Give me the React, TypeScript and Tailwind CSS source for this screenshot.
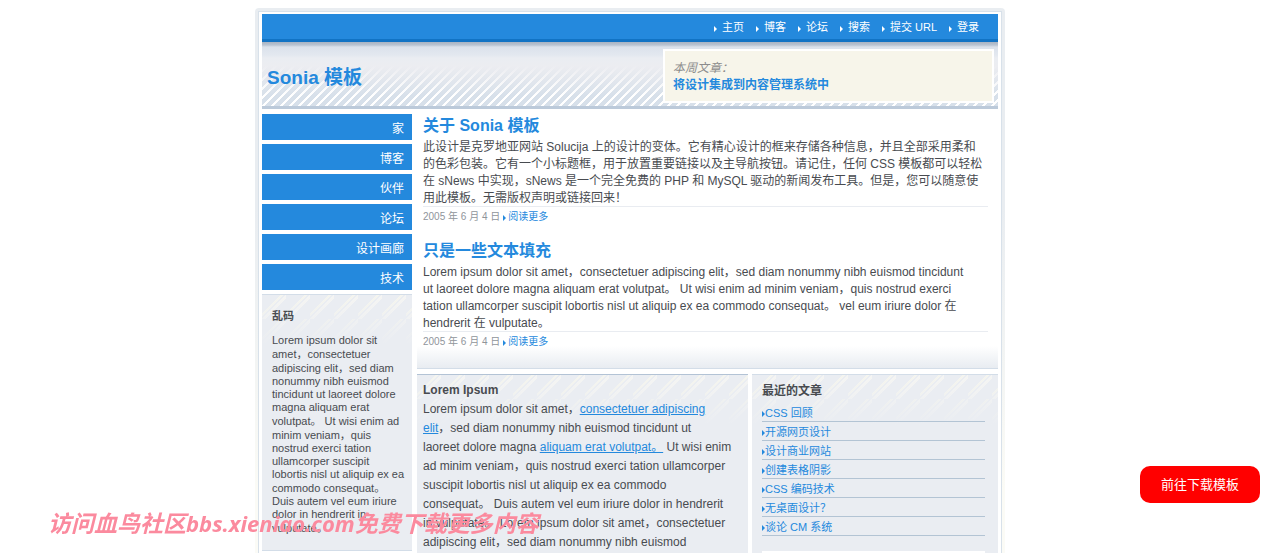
import type { ReactNode } from 'react';

const topLinks = ['主页', '博客', '论坛', '搜索', '提交 URL', '登录'];
const sideLinks = ['家', '博客', '伙伴', '论坛', '设计画廊', '技术'];
const recentPosts = [
  'CSS 回顾',
  '开源网页设计',
  '设计商业网站',
  '创建表格阴影',
  'CSS 编码技术',
  '无桌面设计？',
  '谈论 CM 系统',
];

function Arrow() {
  return (
    <svg viewBox="0 0 3 6" className="mt-[2px] inline-block h-[6px] w-[3px] shrink-0" fill="currentColor" aria-hidden="true">
      <path d="M0 0 L3 3 L0 6 Z" />
    </svg>
  );
}

/* Full-width punctuation makes its line one pixel taller. */
function Mark({ children }: { children: ReactNode }) {
  return <span className="leading-[14px]">{children}</span>;
}

const hatch =
  'bg-[linear-gradient(to_bottom,transparent,#eaedf2_50px),linear-gradient(135deg,#eaedf2_38%,#f5f5ef_38%,#f5f5ef_44%,#eaedf2_44%,#eaedf2_49%,#f5f5f3_49%,#f5f5f3_58%,#eaedf2_58%)] bg-[size:100%_100%,24px_24px]';

function Article({ title, children }: { title: string; children: ReactNode }) {
  return (
    <article className="pl-[6px] pr-[10px]">
      <h2 className="pb-px text-[16px] font-bold leading-[24px] text-[#2489dd]">{title}</h2>
      <p className="h-[68px] whitespace-nowrap border-b border-[#e9ecf1] text-[12px] leading-[17px]">{children}</p>
      <p className="flex items-center text-[10px] leading-[19px] text-[#8f959b]">
        <span>2005 年 6 月 4 日</span>
        <a href="#more" className="ml-[3px] flex items-center gap-[2px] text-[#2489dd]">
          <Arrow />
          阅读更多
        </a>
      </p>
    </article>
  );
}

export default function App() {
  return (
    <div className="flex min-h-screen flex-col bg-white pr-5 pt-2 font-['Liberation_Sans','Noto_Sans_CJK_SC',sans-serif] text-[#484b50]">
      <div className="mx-auto flex w-full max-w-[750px] flex-1 flex-col rounded-t-[4px] bg-[linear-gradient(to_bottom,#e9edf1,#e9edf1_200px,#fbfbf6_480px)] px-[3px] pt-[3px]">
        <div className="flex flex-1 flex-col border-x border-t border-[#d8e1ea] bg-white px-[3px] pt-[2px]">
          <nav className="flex h-[28px] items-center justify-end gap-[12px] border-b-[3px] border-[#1173c4] bg-[#2489dd] pr-[19px] pt-[2px] text-[11px] text-white">
            {topLinks.map((label) => (
              <a key={label} href="#top" className="flex items-center gap-[5px]">
                <Arrow />
                {label}
              </a>
            ))}
          </nav>

          <header className="flex h-[67px] items-center justify-between border-b-[3px] border-[#bccada] bg-[linear-gradient(to_bottom,#a9b4c2,#b9c4d2_3px,#dbe2eb_5px,#e3e8f0_13px,#eaedf2_16px,#ecedf1_24px,transparent_54px),linear-gradient(135deg,#fff_20%,#d7e0ea_20%,#d7e0ea_50%,#fff_50%,#fff_70%,#d7e0ea_70%)] bg-[size:100%_100%,9px_9px] pl-[5px] pr-[4px]">
            <h1 className="pt-[8px] text-[19px] font-bold leading-[24px] text-[#2489dd]">Sonia 模板</h1>
            <div className="mt-[3px] w-[331px] border-2 border-white bg-[#f7f5ea] px-[8px] pb-[7px] pt-[9px] text-[12px] leading-[17px]">
              <p className="italic text-[#8c8c8c]">本周文章：</p>
              <a href="#article" className="block font-bold text-[#2489dd]">
                将设计集成到内容管理系统中
              </a>
            </div>
          </header>

          <div className="flex flex-1 gap-[5px] pt-[5px]">
            <aside className="w-[150px] shrink-0">
              <nav className="flex flex-col gap-[4px]">
                {sideLinks.map((label) => (
                  <a
                    key={label}
                    href="#section"
                    className="block h-[26px] bg-[#2489dd] pr-[8px] text-right text-[12px] leading-[30px] text-white"
                  >
                    {label}
                  </a>
                ))}
              </nav>
              <section
                className={`mt-[4px] border-y border-[#d3dde8] px-[10px] pb-[15px] pt-[13px] text-[11px] leading-[13px] ${hatch}`}
              >
                <h3 className="pb-[10px] font-bold leading-[16px]">乱码</h3>
                <p className="whitespace-nowrap">
                  Lorem ipsum dolor sit
                  <br />
                  amet<Mark>，</Mark>consectetuer
                  <br />
                  adipiscing elit<Mark>，</Mark>sed diam
                  <br />
                  nonummy nibh euismod
                  <br />
                  tincidunt ut laoreet dolore
                  <br />
                  magna aliquam erat
                  <br />
                  volutpat<Mark>。</Mark> Ut wisi enim ad
                  <br />
                  minim veniam<Mark>，</Mark>quis
                  <br />
                  nostrud exerci tation
                  <br />
                  ullamcorper suscipit
                  <br />
                  lobortis nisl ut aliquip ex ea
                  <br />
                  commodo consequat<Mark>。</Mark>
                  <br />
                  Duis autem vel eum iriure
                  <br />
                  dolor in hendrerit in
                  <br />
                  vulputate<Mark>。</Mark>
                </p>
              </section>
            </aside>

            <main className="flex min-w-0 flex-1 flex-col gap-[5px]">
              <div className="flex flex-col gap-[13px] border-b border-[#d3dde8] bg-[linear-gradient(to_top,#e8ecf1,#fff_22px)] pb-[17px]">
                <Article title="关于 Sonia 模板">
                  此设计是克罗地亚网站 Solucija 上的设计的变体。它有精心设计的框来存储各种信息，并且全部采用柔和
                  <br />
                  的色彩包装。它有一个小标题框，用于放置重要链接以及主导航按钮。请记住，任何 CSS 模板都可以轻松
                  <br />
                  在 sNews 中实现，sNews 是一个完全免费的 PHP 和 MySQL 驱动的新闻发布工具。但是，您可以随意使
                  <br />
                  用此模板。无需版权声明或链接回来！
                </Article>
                <Article title="只是一些文本填充">
                  Lorem ipsum dolor sit amet，consectetuer adipiscing elit，sed diam nonummy nibh euismod tincidunt
                  <br />
                  ut laoreet dolore magna aliquam erat volutpat。 Ut wisi enim ad minim veniam，quis nostrud exerci
                  <br />
                  tation ullamcorper suscipit lobortis nisl ut aliquip ex ea commodo consequat。 vel eum iriure dolor 在
                  <br />
                  hendrerit 在 vulputate。
                </Article>
              </div>

              <div className="flex flex-1 gap-[4px]">
                <section className={`min-w-0 flex-1 border-t border-[#b3c3d5] px-[6px] pt-[6px] text-[12px] leading-[19px] ${hatch}`}>
                  <h3 className="font-bold">Lorem Ipsum</h3>
                  <p className="whitespace-nowrap">
                    Lorem ipsum dolor sit amet，
                    <a href="#lorem" className="text-[#2489dd] underline">
                      consectetuer adipiscing
                      <br />
                      elit
                    </a>
                    ，sed diam nonummy nibh euismod tincidunt ut
                    <br />
                    laoreet dolore magna{' '}
                    <a href="#lorem" className="text-[#2489dd] underline">
                      aliquam erat volutpat。
                    </a>{' '}
                    Ut wisi enim
                    <br />
                    ad minim veniam，quis nostrud exerci tation ullamcorper
                    <br />
                    suscipit lobortis nisl ut aliquip ex ea commodo
                    <br />
                    consequat。 Duis autem vel eum iriure dolor in hendrerit
                    <br />
                    in vulputate。 Lorem ipsum dolor sit amet，consectetuer
                    <br />
                    adipiscing elit，sed diam nonummy nibh euismod
                  </p>
                </section>

                <section className={`w-[246px] shrink-0 border-t border-[#d3dde8] pl-[10px] pr-[13px] pt-[7px] ${hatch}`}>
                  <h3 className="pb-[2px] text-[12px] font-bold leading-[19px]">最近的文章</h3>
                  <ul className="text-[11px] leading-[16px] text-[#2489dd]">
                    {recentPosts.map((title) => (
                      <li key={title} className="border-b border-[#b3c4d4] pt-[2px]">
                        <a href="#post" className="flex items-center">
                          <Arrow />
                          {title}
                        </a>
                      </li>
                    ))}
                  </ul>
                  <div className="mt-[15px] h-[2px] bg-white" />
                </section>
              </div>
            </main>
          </div>
        </div>
      </div>

      <p className="pointer-events-none fixed bottom-[15px] left-[48px] whitespace-nowrap font-['Open_Sans','Noto_Sans_CJK_SC',sans-serif] text-[23px] font-bold italic leading-[30px] text-[#fb8a9e]">
        访问血鸟社区<span className="text-[22px]">bbs.xieniao.com</span>免费下载更多内容
      </p>

      <button
        type="button"
        className="fixed bottom-[50px] right-5 h-[37px] w-[120px] rounded-[10px] bg-[#ff0000] text-[13px] text-white"
      >
        前往下载模板
      </button>
    </div>
  );
}
